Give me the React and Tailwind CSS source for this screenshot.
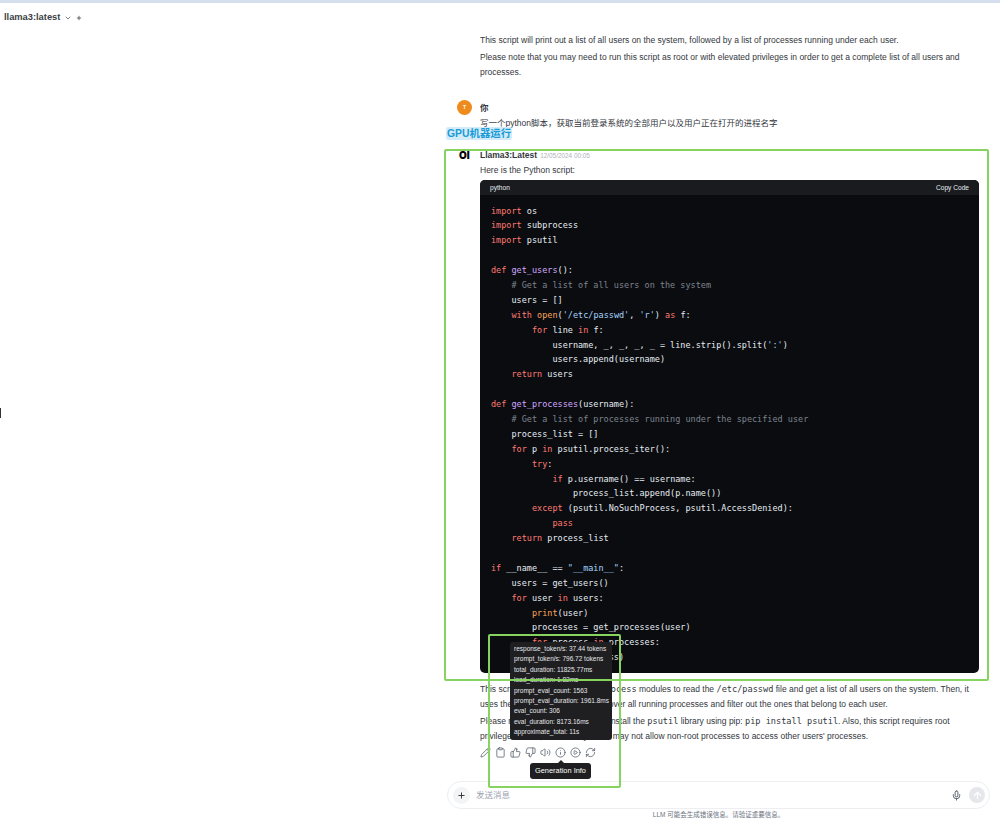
import { ChevronDown, Plus, Pencil, Clipboard, ThumbsUp, ThumbsDown, Volume2, Info, CirclePlay, RefreshCw, Mic, ArrowUp } from 'lucide-react';

const R = ({ children }) => <span className="text-[#ff7b72]">{children}</span>;
const P = ({ children }) => <span className="text-[#d2a8ff]">{children}</span>;
const O = ({ children }) => <span className="text-[#ffa657]">{children}</span>;
const S = ({ children }) => <span className="text-[#a5d6ff]">{children}</span>;
const C = ({ children }) => <span className="text-[#7d848e]">{children}</span>;

const Code = ({ children }) => (
  <code className="font-['DejaVu_Sans_Mono',monospace] text-[8.6px]">{children}</code>
);

const codeLines = [
  <><R>import</R> os</>,
  <><R>import</R> subprocess</>,
  <><R>import</R> psutil</>,
  '',
  <><R>def</R> <P>get_users</P>():</>,
  <>    <C># Get a list of all users on the system</C></>,
  <>    users = []</>,
  <>    <R>with</R> <O>open</O>(<S>'/etc/passwd'</S>, <S>'r'</S>) <R>as</R> f:</>,
  <>        <R>for</R> line <R>in</R> f:</>,
  <>            username, _, _, _, _ = line.strip().split(<S>':'</S>)</>,
  <>            users.append(username)</>,
  <>    <R>return</R> users</>,
  '',
  <><R>def</R> <P>get_processes</P>(username):</>,
  <>    <C># Get a list of processes running under the specified user</C></>,
  <>    process_list = []</>,
  <>    <R>for</R> p <R>in</R> psutil.process_iter():</>,
  <>        <R>try</R>:</>,
  <>            <R>if</R> p.username() == username:</>,
  <>                process_list.append(p.name())</>,
  <>        <R>except</R> (psutil.NoSuchProcess, psutil.AccessDenied):</>,
  <>            <R>pass</R></>,
  <>    <R>return</R> process_list</>,
  '',
  <><R>if</R> __name__ == <S>"__main__"</S>:</>,
  <>    users = get_users()</>,
  <>    <R>for</R> user <R>in</R> users:</>,
  <>        <O>print</O>(user)</>,
  <>        processes = get_processes(user)</>,
  <>        <R>for</R> process <R>in</R> processes:</>,
  <>            <O>print</O>(process)</>,
];

const stats = [
  'response_token/s: 37.44 tokens',
  'prompt_token/s: 796.72 tokens',
  'total_duration: 11825.77ms',
  'load_duration: 1.82ms',
  'prompt_eval_count: 1563',
  'prompt_eval_duration: 1961.8ms',
  'eval_count: 306',
  'eval_duration: 8173.16ms',
  'approximate_total: 11s',
];

const actions = [Pencil, Clipboard, ThumbsUp, ThumbsDown, Volume2, Info, CirclePlay, RefreshCw];

export default function App() {
  return (
    <div className="relative h-[821px] w-[1000px] overflow-hidden bg-white flex flex-col font-['Liberation_Sans','Noto_Sans_CJK_SC',sans-serif] text-[8.5px] text-[#33373d]">
      <div className="h-[3px] bg-[#d5deec] shrink-0" />

      {/* Top bar */}
      <div className="h-[30px] shrink-0 flex items-center pl-[4px] text-[#3b3f45]">
        <span className="text-[9.3px] font-bold">llama3:latest</span>
        <ChevronDown size={8} className="ml-[4px]" />
        <Plus size={6} className="ml-[4px]" strokeWidth={3} />
      </div>

      {/* Chat column */}
      <div className="flex-1 min-h-0 overflow-hidden pl-[455px] pr-[21px]">
        <div className="pl-[25px] leading-[15px]">
          <p>This script will print out a list of all users on the system, followed by a list of processes running under each user.</p>
          <p className="mt-[2px]">Please note that you may need to run this script as root or with elevated privileges in order to get a complete list of all users and processes.</p>
        </div>

        {/* User message */}
        <div className="flex mt-[20px]">
          <div className="w-[25px] shrink-0 pl-[2px]">
            <div className="w-[15px] h-[15px] rounded-full bg-[#ef8a1d] flex items-center justify-center text-white text-[5px] font-bold">T</div>
          </div>
          <div className="leading-[15px]">
            <div className="font-bold pt-[1px]">你</div>
            <div>写一个python脚本，获取当前登录系统的全部用户以及用户正在打开的进程名字</div>
          </div>
        </div>

        {/* Assistant message */}
        <div className="flex mt-[17px]">
          <div className="w-[25px] shrink-0 font-['Inter',sans-serif] font-black text-[10px] text-black leading-[15px] pl-[4px]">OI</div>
          <div className="flex-1 min-w-0">
            <div className="leading-[14px]">
              <span className="font-bold">Llama3:Latest</span>
              <span className="text-[6.4px] text-[#b0b3b8] ml-[3px]">12/05/2024 00:05</span>
            </div>
            <p className="leading-[15px]">Here is the Python script:</p>
            <div className="mt-[2px] h-[493px] rounded-[5px] overflow-hidden bg-[#0b0c10] text-[#e6edf3]">
              <div className="h-[15px] bg-[#1a1b1f] flex items-center justify-between px-[10px] text-[6.6px]">
                <span>python</span>
                <span>Copy Code</span>
              </div>
              <pre className="pt-[8.5px] pl-[11px] font-['DejaVu_Sans_Mono',monospace] text-[8.5px] leading-[14.9px]">
                {codeLines.map((line, i) => <div key={i} className="h-[14.9px]">{line}</div>)}
              </pre>
            </div>
            <div className="mt-[9px] pr-[8px] leading-[15px]">
              <p>This script uses the <Code>os</Code> and <Code>subprocess</Code> modules to read the <Code>/etc/passwd</Code> file and get a list of all users on the system. Then, it uses the <Code>psutil</Code> library to iterate over all running processes and filter out the ones that belong to each user.</p>
              <p className="mt-[2px]">Please note that you may need to install the <Code>psutil</Code> library using pip: <Code>pip install psutil</Code>. Also, this script requires root privileges to run, as some systems may not allow non-root processes to access other users' processes.</p>
            </div>
            <div className="flex items-center gap-[4px] mt-[3px] text-[#4b5563]">
              {actions.map((Icon, i) => <Icon key={i} size={11} strokeWidth={1.6} />)}
            </div>
          </div>
        </div>
      </div>

      {/* Message input */}
      <div className="shrink-0 pl-[447px] pr-[10px]">
        <div className="h-[28px] rounded-full border border-[#eceef1] flex items-center pl-[5px] pr-[4px]">
          <div className="w-[17px] h-[17px] rounded-full bg-[#f3f4f6] flex items-center justify-center text-[#333]">
            <Plus size={9} strokeWidth={2.5} />
          </div>
          <span className="ml-[6px] text-[#9ca3af] flex-1">发送消息</span>
          <Mic size={11} className="text-[#4b5563] mr-[7px]" strokeWidth={2} />
          <div className="w-[16px] h-[16px] rounded-full bg-[#e5e7eb] flex items-center justify-center text-white">
            <ArrowUp size={11} strokeWidth={2.5} />
          </div>
        </div>
        <div className="text-center text-[6.5px] text-[#6b7280] mt-[2px] mb-[2px] leading-[8px]">LLM 可能会生成错误信息。请验证重要信息。</div>
      </div>

      {/* Text cursor at the left edge */}
      <div className="absolute left-0 top-[408px] w-px h-[10px] bg-[#333]" />

      {/* Highlighted note */}
      <div className="absolute left-[446px] top-[127px] h-[13px] px-[1px] bg-[#d3ecf8] text-[#1a9bd8] text-[10.4px] font-bold leading-[13px] rounded-[2px]">GPU机器运行</div>

      {/* Generation stats tooltip */}
      <div className="absolute left-[510px] top-[642px] w-[102px] h-[98px] rounded-[3px] bg-[#1f1f21] text-[#e5e7eb] text-[6.5px] leading-[10.4px] pl-[4px] pt-[2px] whitespace-nowrap">
        {stats.map((s) => <div key={s}>{s}</div>)}
      </div>

      {/* Generation Info tooltip */}
      <div className="absolute left-[530px] top-[763px] w-[61px] h-[16px] rounded-[3px] bg-[#1f1f21] text-white text-[7.4px] leading-[16px] text-center">
        <span className="absolute left-1/2 -translate-x-1/2 -top-[3px] w-0 h-0 border-x-[3px] border-x-transparent border-b-[3px] border-b-[#1f1f21]" />
        Generation Info
      </div>

      {/* Annotation frames */}
      <div className="absolute left-[444px] top-[149px] w-[545px] h-[532px] border-2 border-[#86d45f] rounded-[2px]" />
      <div className="absolute left-[488px] top-[634px] w-[133px] h-[154px] border-2 border-[#86d45f] rounded-[2px]" />
    </div>
  );
}
